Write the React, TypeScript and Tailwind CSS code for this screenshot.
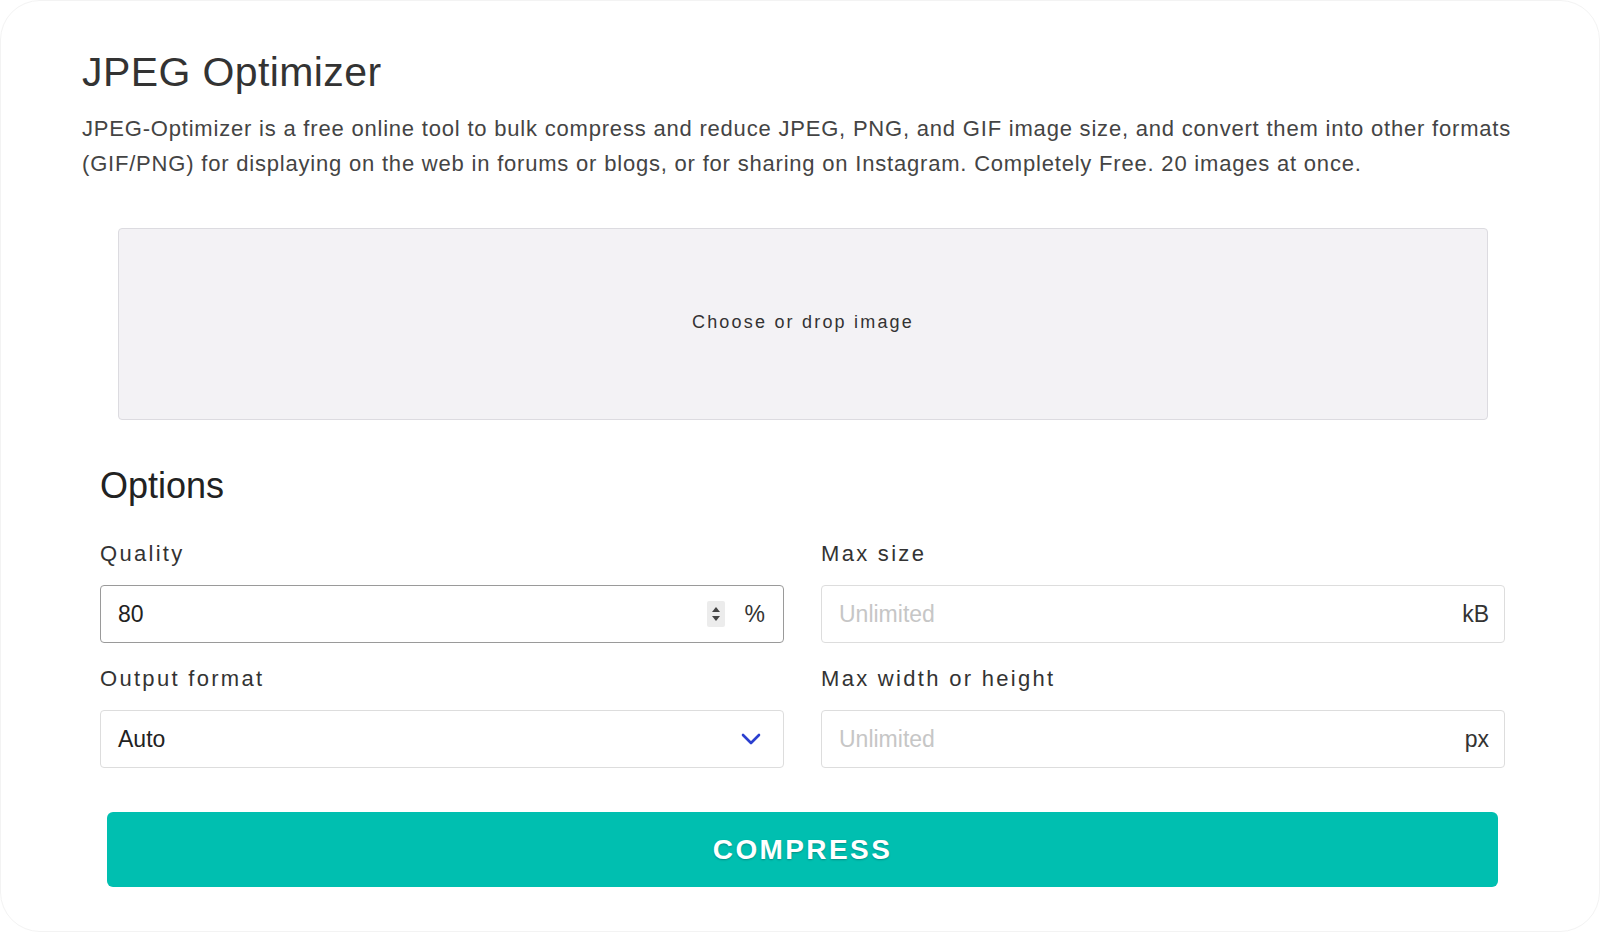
// App.tsx
// JPEG Optimizer upload + options panel

const labelCls = "block h-[30px] text-[22px] leading-[30px] tracking-[2.3px] text-[#333]";
const boxCls =
  "mt-[16px] flex h-[58px] items-center rounded-[4px] border bg-white pl-[17px] text-[23px] leading-none";

const Spinner = () => (
  <div className="flex h-[26px] w-[18px] items-center justify-center rounded-[2px] bg-[#ececec]">
    <svg width="12" height="18" viewBox="0 0 12 18" className="text-[#444]">
      <path d="M6 2 L10 7 L2 7 Z" fill="currentColor" />
      <path d="M6 16 L10 11 L2 11 Z" fill="currentColor" />
    </svg>
  </div>
);

const Chevron = () => (
  <svg width="20" height="14" viewBox="0 0 20 14" fill="none" className="text-[#2b3fcf]">
    <path d="M2 3 L10 11 L18 3" stroke="currentColor" strokeWidth="2.6" strokeLinecap="round" strokeLinejoin="round" />
  </svg>
);

export default function App() {
  return (
    <div className="h-[932px] w-[1600px] bg-white font-['Liberation_Sans',Arial,sans-serif]">
      <div className="h-full rounded-[40px] border border-[#f3f3f3] pl-[81px] pr-[77px] pt-[47px]">
        <h1 className="text-[41px] leading-[49px] tracking-[0.4px] text-[#333]">JPEG Optimizer</h1>
        <p className="mt-[14px] text-[22px] leading-[35px] tracking-[0.8px] text-[#444]">
          JPEG-Optimizer is a free online tool to bulk compress and reduce JPEG, PNG, and GIF image size, and convert
          them into other formats (GIF/PNG) for displaying on the web in forums or blogs, or for sharing on Instagram.
          Completely Free. 20 images at once.
        </p>

        {/* Drop zone */}
        <div className="ml-[36px] mt-[47px] flex h-[192px] w-[1370px] items-center justify-center rounded-[4px] border border-[#dcdbe0] bg-[#f3f2f5] pb-[4px]">
          <span className="text-[18px] tracking-[2.2px] text-[#333]">Choose or drop image</span>
        </div>

        {/* Options */}
        <div className="ml-[18px] w-[1405px]">
          <h2 className="mt-[44px] text-[36px] leading-[43px] text-[#222]">Options</h2>
          <div className="mt-[32px] grid grid-cols-2 gap-x-[37px] gap-y-[21px]">
            <div>
              <label className={labelCls}>Quality</label>
              <div className={`${boxCls} border-[#9a9a9a] pr-[18px] text-[#222]`}>
                <span className="flex-1">80</span>
                <Spinner />
                <span className="ml-[20px] text-[#333]">%</span>
              </div>
            </div>
            <div>
              <label className={labelCls}>Max size</label>
              <div className={`${boxCls} border-[#dddddd] pr-[15px]`}>
                <span className="flex-1 text-[#c6c6c6]">Unlimited</span>
                <span className="text-[#333]">kB</span>
              </div>
            </div>
            <div>
              <label className={labelCls}>Output format</label>
              <div className={`${boxCls} border-[#dddddd] pr-[22px] text-[#222]`}>
                <span className="flex-1">Auto</span>
                <Chevron />
              </div>
            </div>
            <div>
              <label className={labelCls}>Max width or height</label>
              <div className={`${boxCls} border-[#dddddd] pr-[15px]`}>
                <span className="flex-1 text-[#c6c6c6]">Unlimited</span>
                <span className="text-[#333]">px</span>
              </div>
            </div>
          </div>
        </div>

        <button className="ml-[25px] mt-[44px] flex h-[75px] w-[1391px] items-center justify-center rounded-[6px] bg-[#00bfb0] text-[28px] font-bold tracking-[2.4px] text-white [text-shadow:0_1px_2px_rgba(0,0,0,0.25)]">
          COMPRESS
        </button>
      </div>
    </div>
  );
}
